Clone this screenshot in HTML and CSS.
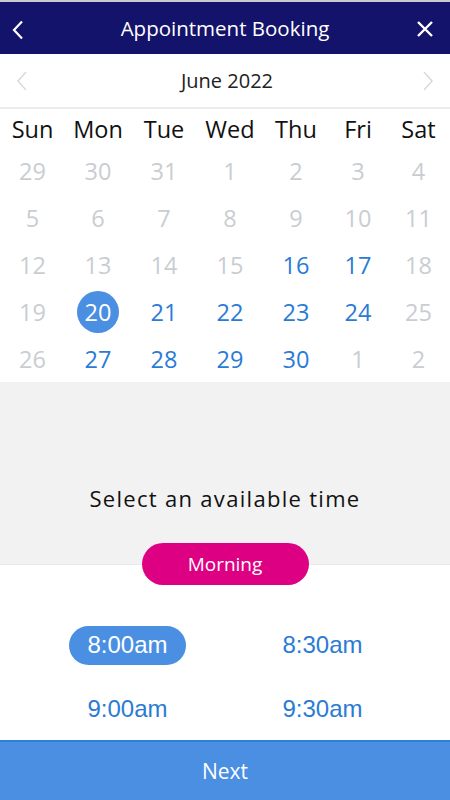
FILE: index.html
```html
<!DOCTYPE html>
<html lang="en">
<head>
<meta charset="utf-8">
<link rel="stylesheet" href="styles.css">
</head>
<body>
<div class="app">
  <header class="topbar">
    <svg class="icon back" viewBox="0 0 14 20" width="14" height="20"><path d="M11 1.5 L3 10 L11 18.5" fill="none" stroke="#fff" stroke-width="2.2"/></svg>
    <h1 class="title">Appointment Booking</h1>
    <svg class="icon close" viewBox="0 0 18 18" width="18" height="18"><path d="M2 2 L16 16 M16 2 L2 16" fill="none" stroke="#fff" stroke-width="2.4"/></svg>
  </header>
  <div class="month">
    <svg class="mchev" viewBox="0 0 12 20" width="12" height="20"><path d="M10 1 L2 10 L10 19" fill="none" stroke="#d6d8dc" stroke-width="1.4"/></svg>
    <span class="month-label">June 2022</span>
    <svg class="mchev" viewBox="0 0 12 20" width="12" height="20"><path d="M2 1 L10 10 L2 19" fill="none" stroke="#d6d8dc" stroke-width="1.4"/></svg>
  </div>
  <div class="cal">
    <div class="dn">Sun</div><div class="dn">Mon</div><div class="dn">Tue</div><div class="dn">Wed</div><div class="dn">Thu</div><div class="dn">Fri</div><div class="dn">Sat</div>
    <div class="d off">29</div><div class="d off">30</div><div class="d off">31</div><div class="d off">1</div><div class="d off">2</div><div class="d off">3</div><div class="d off">4</div>
    <div class="d off">5</div><div class="d off">6</div><div class="d off">7</div><div class="d off">8</div><div class="d off">9</div><div class="d off">10</div><div class="d off">11</div>
    <div class="d off">12</div><div class="d off">13</div><div class="d off">14</div><div class="d off">15</div><div class="d on">16</div><div class="d on">17</div><div class="d off">18</div>
    <div class="d off">19</div><div class="d on"><span class="sel">20</span></div><div class="d on">21</div><div class="d on">22</div><div class="d on">23</div><div class="d on">24</div><div class="d off">25</div>
    <div class="d off">26</div><div class="d on">27</div><div class="d on">28</div><div class="d on">29</div><div class="d on">30</div><div class="d off">1</div><div class="d off">2</div>
  </div>
  <section class="prompt">
    <p class="prompt-text">Select an available time</p>
    <span class="period">Morning</span>
  </section>
  <section class="slots">
    <div class="slot"><span class="slot-pill active">8:00am</span></div>
    <div class="slot"><span class="slot-pill">8:30am</span></div>
    <div class="slot"><span class="slot-pill">9:00am</span></div>
    <div class="slot"><span class="slot-pill">9:30am</span></div>
  </section>
  <button class="next">Next</button>
</div>
</body>
</html>
```
FILE: styles.css
```css
* { box-sizing: border-box; }
html, body { margin: 0; padding: 0; }
body { font-family: "Open Sans", "Noto Sans", sans-serif; background: #fff; }
.app { width: 450px; height: 800px; display: flex; flex-direction: column; overflow: hidden; }

.topbar {
  height: 54px;
  border-top: 2px solid #c9c9cf;
  background: #14136b;
  display: flex;
  align-items: center;
  justify-content: space-between;
  padding: 0 16px 0 11px;
  flex-shrink: 0;
}
.title { margin: 0; color: #fff; font-size: 20.5px; font-weight: 400; line-height: 1; padding-left: 9px; }
.icon { display: block; }
.back { margin-top: 4px; }
.close { margin-top: 1px; }

.month {
  height: 55px;
  border-bottom: 2px solid #e9ebef;
  display: flex;
  align-items: center;
  justify-content: space-between;
  padding: 0 16px 0 16px;
  flex-shrink: 0;
}
.month-label { font-size: 20px; color: #222; padding-left: 4px; }

.cal {
  display: grid;
  grid-template-columns: 65px 66px 66px 66px 66px 58px 63px;
  grid-template-rows: 38px repeat(5, 47px);
  flex-shrink: 0;
}
.dn { display: flex; align-items: center; justify-content: center; font-size: 23.5px; color: #111; padding-top: 2px; }
.d { display: flex; align-items: center; justify-content: center; font-size: 23.5px; }
.off { color: #c9cdd2; }
.on { color: #2a7bd6; }
.sel {
  width: 42px; height: 42px; border-radius: 50%;
  background: #4a8fe2; color: #fff;
  display: flex; align-items: center; justify-content: center;
}

.prompt {
  height: 183px;
  background: #f2f2f2;
  border-bottom: 1px solid #e6e9ee;
  display: flex;
  flex-direction: column;
  align-items: center;
  justify-content: flex-end;
  flex-shrink: 0;
  position: relative;
  z-index: 1;
}
.prompt-text { margin: 0 0 30px; font-size: 22px; letter-spacing: 1.3px; color: #111; line-height: 30px; }
.period {
  width: 167px; height: 42px; border-radius: 21px;
  background: #de0083; color: #fff;
  font-size: 19px;
  display: flex; align-items: center; justify-content: center;
  margin-bottom: -21px;
}

.slots {
  flex: 1;
  display: grid;
  grid-template-columns: 186px 264px;
  grid-template-rows: 64px 63px;
  align-content: start;
  padding-top: 48px;
}
.slot { display: flex; align-items: center; }
.slot:nth-child(odd) { justify-content: flex-end; }
.slot:nth-child(even) { justify-content: flex-start; padding-left: 78px; }
.slot-pill {
  font-family: "Liberation Sans", Arial, sans-serif;
  font-size: 24px;
  color: #2a7bd6;
  width: 117px; height: 39px; border-radius: 20px;
  display: flex; align-items: center; justify-content: center;
}
.slot-pill.active { background: #4a8fe2; color: #fff; }

.next {
  height: 60px;
  flex-shrink: 0;
  border: 0;
  border-top: 2px solid #2f80db;
  background: #4a8fe2;
  color: #fff;
  font-family: "Open Sans", "Noto Sans", sans-serif;
  font-size: 21px;
  padding: 0;
}
```
